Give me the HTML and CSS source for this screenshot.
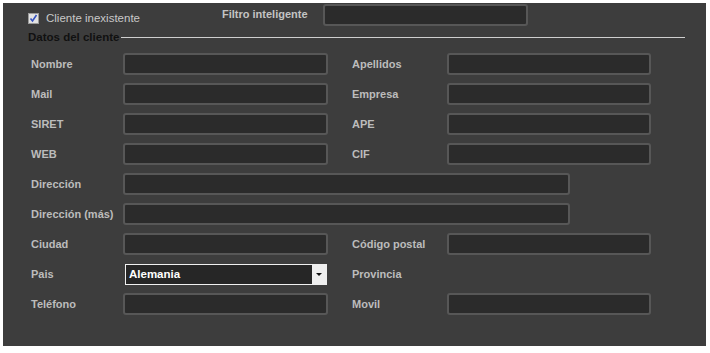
FILE: index.html
```html
<!DOCTYPE html>
<html lang="es">
<head>
    <meta charset="UTF-8">
    <title>Datos del cliente</title>
    <link rel="stylesheet" href="styles.css">
</head>
<body>
    <div class="panel">
        <div class="top-bar">
            <label class="check-item">
                <span class="check-box">
                    <svg width="11" height="11" viewBox="0 0 11 11">
                        <path d="M2.5 5.5 L4.5 8 L8.5 2" fill="none" stroke="#3552c0" stroke-width="1.6"/>
                    </svg>
                </span>
                <span class="check-text">Cliente inexistente</span>
            </label>
            <span class="filter-label">Filtro inteligente</span>
            <span class="field filter-field"></span>
        </div>

        <div class="legend">
            <span class="legend-text">Datos del cliente</span>
            <span class="legend-line"></span>
        </div>

        <div class="form-grid">
            <span class="lbl">Nombre</span>
            <span class="field"></span>
            <span class="lbl lbl-right">Apellidos</span>
            <span class="field"></span>

            <span class="lbl">Mail</span>
            <span class="field"></span>
            <span class="lbl lbl-right">Empresa</span>
            <span class="field"></span>

            <span class="lbl">SIRET</span>
            <span class="field"></span>
            <span class="lbl lbl-right">APE</span>
            <span class="field"></span>

            <span class="lbl">WEB</span>
            <span class="field"></span>
            <span class="lbl lbl-right">CIF</span>
            <span class="field"></span>

            <span class="lbl">Dirección</span>
            <span class="field field-long"></span>

            <span class="lbl">Dirección (más)</span>
            <span class="field field-long"></span>

            <span class="lbl">Ciudad</span>
            <span class="field"></span>
            <span class="lbl lbl-right">Código postal</span>
            <span class="field"></span>

            <span class="lbl">Pais</span>
            <div class="select">
                <span class="select-text">Alemania</span>
                <span class="select-btn"><span class="arrow"></span></span>
            </div>
            <span class="lbl lbl-right">Provincia</span>
            <span></span>

            <span class="lbl">Teléfono</span>
            <span class="field"></span>
            <span class="lbl lbl-right">Movil</span>
            <span class="field"></span>
        </div>
    </div>
</body>
</html>
```

FILE: styles.css
```css
body {
    margin: 0;
    background-color: #fff;
    font-family: 'Liberation Sans', Arial, sans-serif;
}

.panel {
    margin: 3px 0 0 3px;
    width: 703px;
    height: 343px;
    background-color: #3d3d3d;
    box-sizing: border-box;
    padding-top: 1px;
}

.top-bar {
    display: flex;
    align-items: flex-start;
    height: 22px;
    padding-left: 25px;
}

.check-item {
    display: flex;
    align-items: center;
    width: 194px;
    margin-top: 8px;
}

.check-box {
    display: inline-block;
    width: 11px;
    height: 11px;
    box-sizing: border-box;
    background-color: #e2e2e2;
    border: 1px solid #9a9a9a;
    margin-right: 7px;
}

.check-box svg {
    display: block;
    margin: -1px 0 0 -1px;
}

.check-text {
    color: #c8c8c8;
    font-size: 11.5px;
}

.filter-label {
    width: 101px;
    color: #c4c4c4;
    font-size: 11px;
    font-weight: bold;
    margin-top: 4px;
}

.field {
    display: block;
    height: 22px;
    box-sizing: border-box;
    background-color: #2b2b2b;
    border: 2px solid #575757;
    border-radius: 3px;
}

.filter-field {
    width: 205px;
}

.legend {
    display: flex;
    align-items: center;
    margin-top: 4px;
    padding: 0 21px 0 25px;
    height: 14px;
}

.legend-text {
    color: #111;
    font-size: 11.5px;
    font-weight: bold;
    margin-right: 2px;
}

.legend-line {
    flex: 1;
    height: 1px;
    background-color: #cfcfcf;
}

.form-grid {
    display: grid;
    grid-template-columns: 92px 205px 119px 204px;
    grid-auto-rows: 22px;
    row-gap: 8px;
    align-items: center;
    margin-top: 9px;
    padding-left: 28px;
}

.lbl {
    color: #bcbcbc;
    font-size: 11px;
    font-weight: bold;
    white-space: nowrap;
}

.lbl-right {
    padding-left: 24px;
}

.field-long {
    grid-column: 2 / 5;
    width: 447px;
}

.select {
    display: flex;
    height: 21px;
    margin: 0 1px 0 2px;
    box-sizing: border-box;
    border: 1px solid #f0f0f0;
    background-color: #262626;
}

.select-text {
    flex: 1;
    color: #fff;
    font-size: 11.5px;
    font-weight: bold;
    line-height: 19px;
    padding-left: 3px;
}

.select-btn {
    width: 14px;
    background-color: #efefef;
    display: flex;
    align-items: center;
    justify-content: center;
}

.arrow {
    width: 0;
    height: 0;
    border-left: 3px solid transparent;
    border-right: 3px solid transparent;
    border-top: 3px solid #111;
}
```
